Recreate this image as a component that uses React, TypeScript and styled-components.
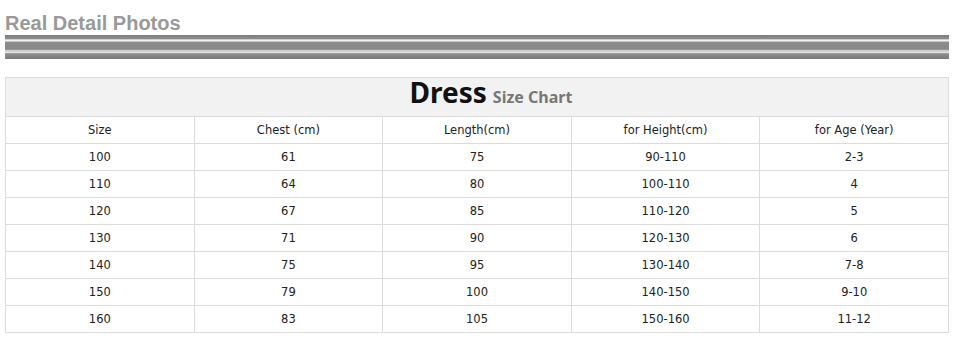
import styled, { createGlobalStyle } from 'styled-components';

const GlobalStyle = createGlobalStyle`
  body {
    margin: 0;
    background: #fff;
  }
`;

interface SizeRow {
  size: string;
  chest: string;
  length: string;
  height: string;
  age: string;
}

const rows: SizeRow[] = [
  { size: '100', chest: '61', length: '75', height: '90-110', age: '2-3' },
  { size: '110', chest: '64', length: '80', height: '100-110', age: '4' },
  { size: '120', chest: '67', length: '85', height: '110-120', age: '5' },
  { size: '130', chest: '71', length: '90', height: '120-130', age: '6' },
  { size: '140', chest: '75', length: '95', height: '130-140', age: '7-8' },
  { size: '150', chest: '79', length: '100', height: '140-150', age: '9-10' },
  { size: '160', chest: '83', length: '105', height: '150-160', age: '11-12' },
];

const columns = ['Size', 'Chest (cm)', 'Length(cm)', 'for Height(cm)', 'for Age (Year)'];

const Page = styled.div`
  width: 944px;
  padding: 0 5px;
`;

const SectionTitle = styled.h2`
  margin: 11px 0 0;
  height: 24px;
  line-height: 24px;
  font-family: 'Liberation Sans', Arial, sans-serif;
  font-size: 20px;
  font-weight: bold;
  color: #999;
`;

// grey double-rule under the section title
const StripeBar = styled.div`
  height: 24px;
  background: linear-gradient(
    to bottom,
    #7e7e7e 0px,
    #8a8a8a 3.5px,
    #cfcfcf 4.5px,
    #f2f2f2 5.5px,
    #c4c4c4 6.5px,
    #8c8c8c 7.5px,
    #888 14px,
    #a8a8a8 15px,
    #ececec 16px,
    #b8b8b8 17px,
    #e4e4e4 17.5px,
    #9a9a9a 18.5px,
    #888 20px,
    #7a7a7a 24px
  );
`;

const ChartTable = styled.table`
  margin-top: 18px;
  width: 944px;
  border-collapse: collapse;
  table-layout: fixed;
`;

const HeadCell = styled.th`
  height: 38px;
  padding: 0 0 0 28px;
  background: #f2f2f2;
  border: 1px solid #dcdcdc;
  text-align: center;
  vertical-align: top;
  font-family: 'Noto Sans', sans-serif;
  font-size: 16px;
  line-height: 28px;
`;

const DressWord = styled.span`
  font-size: 28px;
  font-weight: bold;
  color: #111;
`;

const ChartWord = styled.span`
  margin-left: 6px;
  font-size: 16px;
  font-weight: bold;
  color: #777;
`;

const Cell = styled.td`
  height: 26px;
  padding: 0;
  border: 1px solid #dcdcdc;
  text-align: center;
  font-family: 'DejaVu Sans', Tahoma, sans-serif;
  font-size: 11.5px;
  color: #222;
`;

export default function App() {
  return (
    <Page>
      <GlobalStyle />
      <SectionTitle>Real Detail Photos</SectionTitle>
      <StripeBar />
      <ChartTable>
        <thead>
          <tr>
            <HeadCell colSpan={5}>
              <DressWord>Dress</DressWord>
              <ChartWord>Size Chart</ChartWord>
            </HeadCell>
          </tr>
        </thead>
        <tbody>
          <tr>
            {columns.map((c) => (
              <Cell key={c}>{c}</Cell>
            ))}
          </tr>
          {rows.map((r) => (
            <tr key={r.size}>
              <Cell>{r.size}</Cell>
              <Cell>{r.chest}</Cell>
              <Cell>{r.length}</Cell>
              <Cell>{r.height}</Cell>
              <Cell>{r.age}</Cell>
            </tr>
          ))}
        </tbody>
      </ChartTable>
    </Page>
  );
}
